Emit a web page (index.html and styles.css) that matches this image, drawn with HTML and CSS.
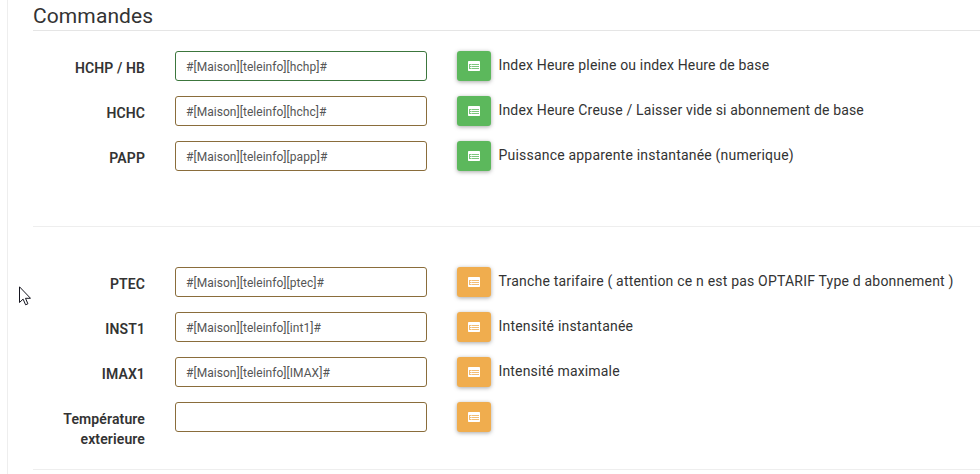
FILE: index.html
```
<!DOCTYPE html>
<html lang="fr">
<head>
<meta charset="utf-8">
<title>Commandes</title>
<link rel="stylesheet" href="styles.css">
</head>
<body>
<svg width="0" height="0" class="sprite">
  <symbol id="list" viewBox="0 0 12 10">
    <rect width="12" height="10" rx=".7" fill="#fff"/>
    <path d="M1 3h10v1H1zM2 5h9v1H2zM2 7h9v1H2zM1 4h1v4H1z" fill="currentColor"/>
    <path d="M3 3h1v5H3z" fill="#fff" opacity=".4"/>
  </symbol>
</svg>
<main class="panel">
  <h1 class="legend">Commandes</h1>
  <section class="group">
    <div class="row"><label class="label">HCHP / HB</label><input class="field valid" value="#[Maison][teleinfo][hchp]#"><button class="btn green"><svg class="icon"><use href="#list"/></svg></button><span class="help">Index Heure pleine ou index Heure de base</span></div>
    <div class="row"><label class="label">HCHC</label><input class="field" value="#[Maison][teleinfo][hchc]#"><button class="btn green"><svg class="icon"><use href="#list"/></svg></button><span class="help">Index Heure Creuse / Laisser vide si abonnement de base</span></div>
    <div class="row"><label class="label">PAPP</label><input class="field" value="#[Maison][teleinfo][papp]#"><button class="btn green"><svg class="icon"><use href="#list"/></svg></button><span class="help wide">Puissance apparente instantanée (numerique)</span></div>
  </section>
  <section class="group second">
    <div class="row"><label class="label">PTEC</label><input class="field" value="#[Maison][teleinfo][ptec]#"><button class="btn orange"><svg class="icon"><use href="#list"/></svg></button><span class="help wide">Tranche tarifaire ( attention ce n est pas OPTARIF Type d abonnement )</span></div>
    <div class="row"><label class="label">INST1</label><input class="field" value="#[Maison][teleinfo][int1]#"><button class="btn orange"><svg class="icon"><use href="#list"/></svg></button><span class="help wide">Intensité instantanée</span></div>
    <div class="row"><label class="label">IMAX1</label><input class="field" value="#[Maison][teleinfo][IMAX]#"><button class="btn orange"><svg class="icon"><use href="#list"/></svg></button><span class="help">Intensité maximale</span></div>
    <div class="row"><label class="label">Température<br>exterieure</label><input class="field" value=""><button class="btn orange"><svg class="icon"><use href="#list"/></svg></button></div>
  </section>
</main>
<svg class="cursor" viewBox="0 0 12 20"><path d="M.5.8v15.700l3.600-3.400 2.500 5.700 2.300-1-2.400-5.500h5z" fill="#fff" stroke="#15151f" stroke-width="1"/></svg>
</body>
</html>
```
FILE: styles.css
```
* { box-sizing: border-box; }
body {
  margin: 0;
  height: 474px;
  overflow: hidden;
  background: #fff;
  color: #333;
  font: 14px/20px Roboto, "Liberation Sans", sans-serif;
  letter-spacing: .1px;
}
.sprite { position: absolute; }
.panel {
  margin-left: 7px;
  padding-left: 25px;
  height: 474px;
  border-left: 1px solid #eee;
}
.legend {
  margin: 0;
  height: 31px;
  padding-top: 1px;
  border-bottom: 1px solid #e5e5e5;
  font-size: 21px;
  line-height: 30px;
  font-weight: 400;
}
.group {
  display: flex;
  flex-direction: column;
  gap: 15px;
  height: 196px;
  padding-top: 20px;
  border-bottom: 1px solid #eee;
}
.second { height: 243px; padding-top: 40px; }
.row {
  display: grid;
  grid-template-columns: 112px 252px 34px 1fr;
  height: 30px;
  align-items: start;
}
.label {
  padding-top: 7px;
  text-align: right;
  font-weight: 600;
  letter-spacing: .12px;
}
.field {
  margin-left: 30px;
  width: 252px;
  height: 30px;
  padding: 1px 10px 0;
  border: 1px solid #8a6d3b;
  border-radius: 3px;
  background: #fff;
  color: #555;
  font: 12px Roboto, "Liberation Sans", sans-serif;
  letter-spacing: .04px;
  outline: 0;
}
.valid { border-color: #3c763d; }
.btn {
  display: flex;
  align-items: center;
  justify-content: center;
  margin-left: 60px;
  width: 34px;
  height: 30px;
  padding: 0;
  border: 0;
  border-radius: 3px;
  box-shadow: 0 1px 4px rgba(0, 0, 0, .35);
}
.green { background: #5cb85c; color: #7cc67c; }
.orange { background: #f0ad4e; color: #f3bd74; }
.icon { width: 12px; height: 10px; }
.help { margin-left: 67.5px; padding-top: 4px; white-space: nowrap; letter-spacing: .16px; }
.wide { letter-spacing: .2px; }
.cursor { position: absolute; left: 19px; top: 286px; width: 12px; height: 20px; }
```
